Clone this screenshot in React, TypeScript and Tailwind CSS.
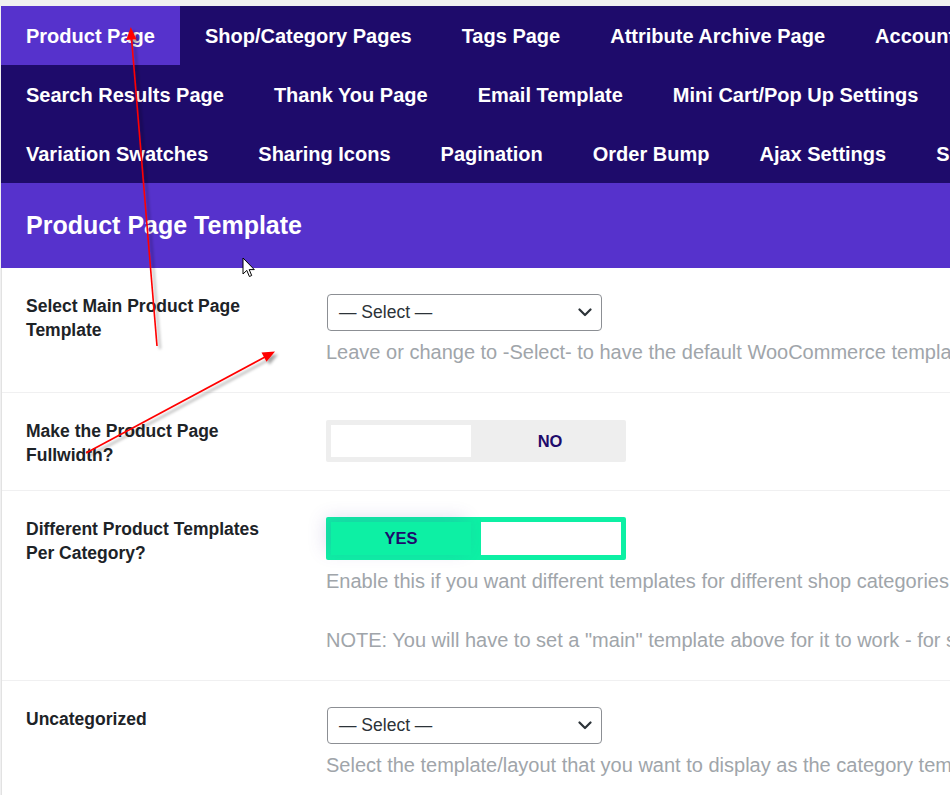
import React from 'react'

const navRows: string[][] = [
  ['Product Page', 'Shop/Category Pages', 'Tags Page', 'Attribute Archive Page', 'Account Page'],
  ['Search Results Page', 'Thank You Page', 'Email Template', 'Mini Cart/Pop Up Settings', 'Checkout Page'],
  ['Variation Swatches', 'Sharing Icons', 'Pagination', 'Order Bump', 'Ajax Settings', 'Shortcodes'],
]

const Select: React.FC = () => (
  <div className="ml-px flex h-[37px] w-[275px] items-center justify-between rounded-[4px] border border-[#8c8f94] bg-white pl-[11px] pr-[9px] text-[17.5px] text-[#2c3338]">
    <span>— Select —</span>
    <svg width="14" height="9" viewBox="0 0 14 9" fill="none">
      <path d="M1.5 1.5 7 7l5.5-5.5" stroke="#2c3338" strokeWidth="2.2" strokeLinecap="round" strokeLinejoin="round" />
    </svg>
  </div>
)

const Help: React.FC<{ children: React.ReactNode }> = ({ children }) => (
  <p className="mt-[6px] whitespace-nowrap text-[20px] leading-[30px] text-[#a0a5aa]">{children}</p>
)

const Row: React.FC<{ label: string; pb?: string; children: React.ReactNode }> = ({ label, pb = 'pb-[25px]', children }) => (
  <div className={`flex border-b border-[#f0f0f1] px-[24px] pt-[26px] ${pb}`}>
    <div className="w-[250px] shrink-0 text-[17.5px] font-bold leading-[24px] text-[#1d2327]">{label}</div>
    <div className="ml-[50px] min-w-0">{children}</div>
  </div>
)

const ToggleOff: React.FC = () => (
  <div className="flex h-[42px] w-[300px] rounded-[2px] bg-[#eeeeee] p-[5px]">
    <div className="w-[140px] bg-white" />
    <div className="flex flex-1 items-center justify-center pl-[8px] text-[16.5px] font-bold text-[#1e0b6b]">NO</div>
  </div>
)

const ToggleOn: React.FC = () => (
  <div className="flex h-[43px] w-[300px] justify-between rounded-[2px] bg-[#0df0a4] p-[5px]">
    <div className="flex w-[140px] items-center justify-center text-[16.5px] font-bold text-[#1e0b6b] shadow-[-6px_-4px_18px_rgba(90,70,170,0.18)]">
      YES
    </div>
    <div className="w-[140px] bg-white" />
  </div>
)

const Annotations: React.FC = () => (
  <svg className="pointer-events-none absolute inset-0" width="950" height="795" viewBox="0 0 950 795">
    <defs>
      <filter id="sh" x="-20%" y="-20%" width="140%" height="140%">
        <feDropShadow dx="3" dy="3" stdDeviation="1.5" floodColor="#000" floodOpacity="0.35" />
      </filter>
    </defs>
    <g filter="url(#sh)">
      <line x1="157" y1="346" x2="131.5" y2="38" stroke="#ff0000" strokeWidth="1.6" />
      <polygon points="130.8,27 126.2,40 136.4,39.2" fill="#ff0000" />
      <line x1="86" y1="453" x2="265" y2="357" stroke="#ff0000" strokeWidth="1.6" />
      <polygon points="275,351.5 261.5,352.5 266.5,361.8" fill="#ff0000" />
    </g>
    <path
      d="M243 258 L243 274 L246.8 270.4 L249.4 276.5 L251.7 275.5 L249.2 269.6 L254.3 269.6 Z"
      fill="#fff"
      stroke="#000"
      strokeWidth="1"
      strokeLinejoin="round"
    />
  </svg>
)

const App: React.FC = () => {
  return (
    <div className="relative h-[795px] w-[950px] overflow-hidden bg-[#f0f0f1] pt-[6px] pl-px font-['Liberation_Sans',Arial,sans-serif]">
      <div className="w-[1300px]">
        <nav className="bg-[#1e0b6b]">
          {navRows.map((row, ri) => (
            <div key={ri} className="flex h-[59px] whitespace-nowrap">
              {row.map((item, i) => (
                <div
                  key={item}
                  className={`flex items-center px-[25px] text-[20px] font-bold text-white ${
                    ri === 0 && i === 0 ? 'bg-[#5632cc]' : ''
                  }`}
                >
                  {item}
                </div>
              ))}
            </div>
          ))}
        </nav>

        <div className="flex h-[85px] items-center bg-[#5632cc] px-[25px] text-[25px] font-bold text-white">
          Product Page Template
        </div>

        <div className="border-l border-[#e2e2e2] bg-white">
          <Row label="Select Main Product Page Template">
            <Select />
            <Help>Leave or change to -Select- to have the default WooCommerce template used for the product page.</Help>
          </Row>
          <Row label="Make the Product Page Fullwidth?" pb="pb-[23px]">
            <div className="pt-px">
              <ToggleOff />
            </div>
          </Row>
          <Row label="Different Product Templates Per Category?">
            <ToggleOn />
            <Help>Enable this if you want different templates for different shop categories.</Help>
            <Help>
              <span className="block pt-[23px]">
                NOTE: You will have to set a "main" template above for it to work - for shop categories without a template set.
              </span>
            </Help>
          </Row>
          <Row label="Uncategorized">
            <Select />
            <Help>Select the template/layout that you want to display as the category template.</Help>
          </Row>
        </div>
      </div>
      <Annotations />
    </div>
  )
}

export default App
